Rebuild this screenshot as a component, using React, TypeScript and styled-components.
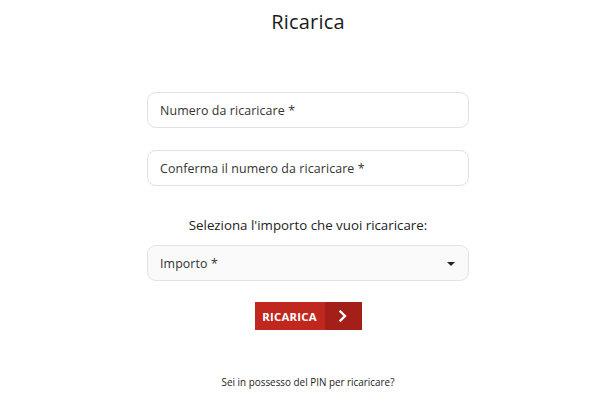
import styled, { createGlobalStyle } from 'styled-components'

const GlobalStyle = createGlobalStyle`
	html, body {
		margin: 0;
		padding: 0;
		background: #ffffff;
	}
	body {
		font-family: 'Open Sans', 'Noto Sans', sans-serif;
		color: #1a1a1a;
	}
`

export default function App() {
	return (
		<>
			<GlobalStyle />
			<Page>
				<Title>Ricarica</Title>
				<Form>
					<Field>
						<FieldLabel>Numero da ricaricare *</FieldLabel>
					</Field>
					<Field>
						<FieldLabel>Conferma il numero da ricaricare *</FieldLabel>
					</Field>
					<Prompt>Seleziona l'importo che vuoi ricaricare:</Prompt>
					<Field select>
						<FieldLabel>Importo *</FieldLabel>
						<Caret />
					</Field>
				</Form>
				<SubmitButton type="button">
					<ButtonText>RICARICA</ButtonText>
					<ButtonArrow>
						<svg width="10" height="12" viewBox="0 0 10 12" fill="none">
							<path
								d="M2.5 1.5 L7 6 L2.5 10.5"
								stroke="#ffffff"
								strokeWidth="2.4"
								strokeLinecap="square"
							/>
						</svg>
					</ButtonArrow>
				</SubmitButton>
				<Footer>Sei in possesso del PIN per ricaricare?</Footer>
			</Page>
		</>
	)
}

const Page = styled.div`
	width: 610px;
	height: 404px;
	display: flex;
	flex-direction: column;
	align-items: center;
	box-sizing: border-box;
	padding: 9px 0 0 6px;
`

const Title = styled.h1`
	margin: 0;
	font-size: 20px;
	font-weight: 400;
	line-height: 26px;
	letter-spacing: 0.2px;
`

const Form = styled.div`
	margin-top: 57px;
	width: 322px;
	display: flex;
	flex-direction: column;
`

const Field = styled.div<{ select?: boolean }>`
	height: 36px;
	box-sizing: border-box;
	border: 1px solid #e2e2e2;
	border-radius: 9px;
	background: ${(p) => (p.select ? '#fafafa' : '#ffffff')};
	display: flex;
	align-items: center;
	justify-content: space-between;
	padding: 0 13px 0 12px;
	& + & {
		margin-top: 22px;
	}
`

const FieldLabel = styled.span`
	font-size: 12.4px;
	color: #333333;
	letter-spacing: 0.1px;
`

const Caret = styled.span`
	width: 0;
	height: 0;
	border-left: 4px solid transparent;
	border-right: 4px solid transparent;
	border-top: 4px solid #222222;
	margin-top: 1px;
`

const Prompt = styled.div`
	margin: 30px 0 11px;
	text-align: center;
	font-size: 13.3px;
	line-height: 18px;
	color: #222222;
`

const SubmitButton = styled.button`
	margin-top: 21px;
	height: 28px;
	width: 107px;
	padding: 0;
	border: none;
	display: flex;
	background: #c0271e;
	cursor: pointer;
`

const ButtonText = styled.span`
	flex: 1;
	display: flex;
	align-items: center;
	justify-content: center;
	color: #ffffff;
	font-family: 'Open Sans', sans-serif;
	font-weight: 700;
	font-size: 11.4px;
	letter-spacing: 0.2px;
`

const ButtonArrow = styled.span`
	width: 37px;
	display: flex;
	align-items: center;
	justify-content: center;
	background: #a31f17;
`

const Footer = styled.div`
	margin-top: 45px;
	font-size: 9.9px;
	color: #222222;
`
